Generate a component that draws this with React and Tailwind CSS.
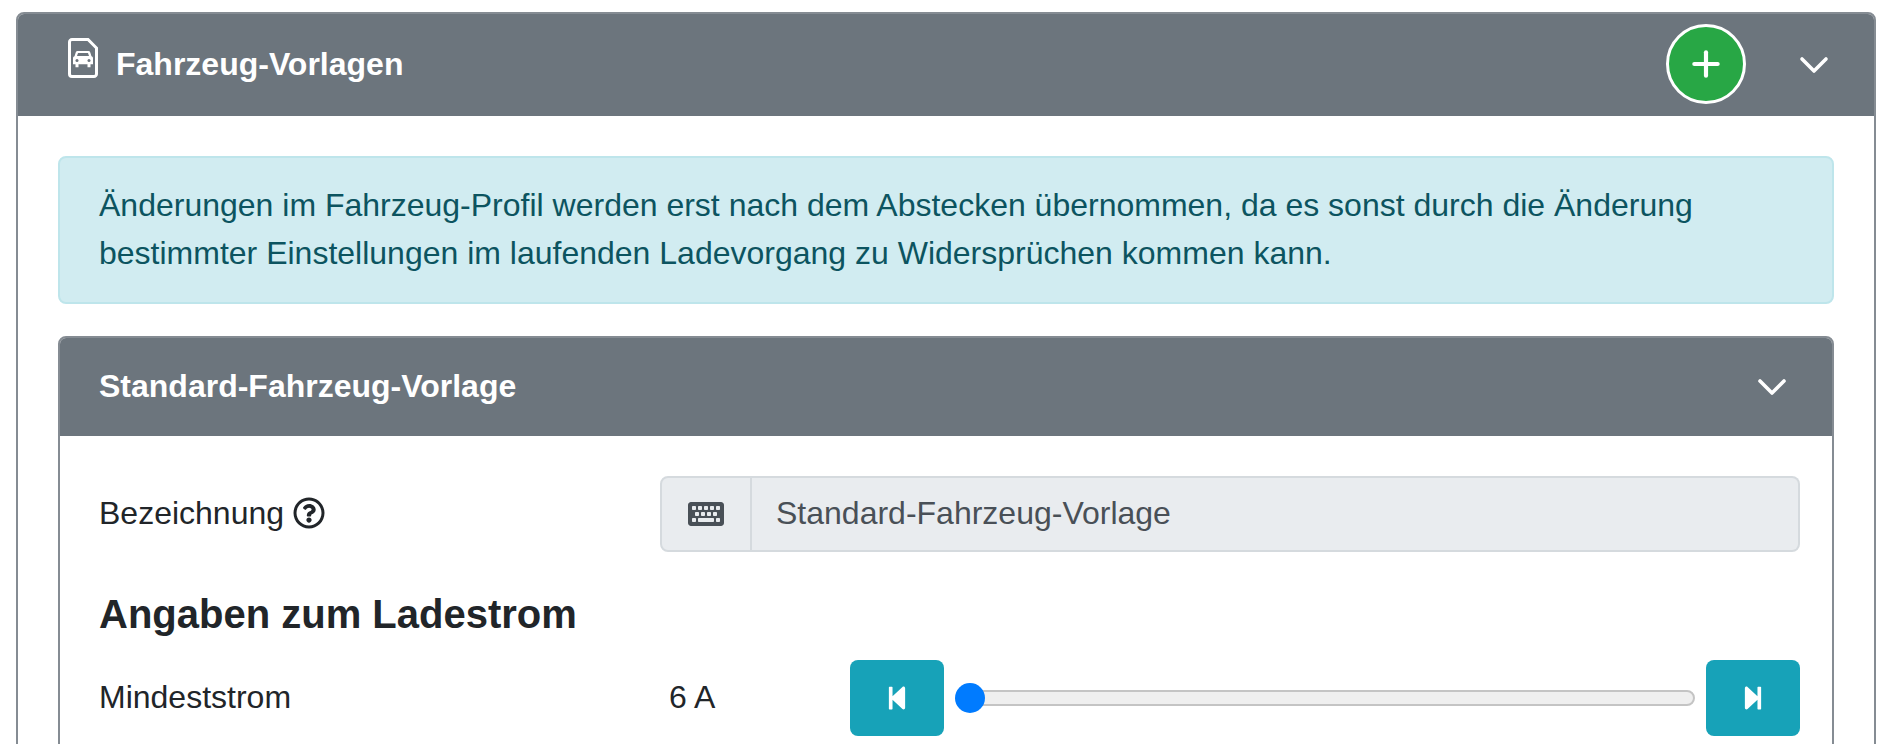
import React from "react";
import { ChevronDown, Plus } from "lucide-react";
import {
  FaKeyboard,
  FaRegQuestionCircle,
  FaStepBackward,
  FaStepForward,
} from "react-icons/fa";

function FileCarIcon() {
  return (
    <svg viewBox="0 0 30 40" className="w-[30px] h-[40px]" fill="none">
      <path
        d="M4 1.500h16L28.500 10v26a2.500 2.500 0 0 1-2.500 2.500H4A2.500 2.500 0 0 1 1.500 36V4A2.500 2.500 0 0 1 4 1.500z"
        stroke="white"
        strokeWidth="3"
      />
      <path
        d="M9.500 13h11c.8 0 1.400.4 1.700 1.200l1.300 4c.9.4 1.500 1.100 1.500 2v6h-2.500v3h-3v-3H10.500v3h-3v-3H5v-6c0-.9.6-1.600 1.500-2l1.300-4c.3-.8.9-1.200 1.700-1.200z"
        fill="white"
      />
      <path d="M10 15h10l1 3H9z" fill="#6c757d" />
      <circle cx="9" cy="22.500" r="1.500" fill="#6c757d" />
      <circle cx="21" cy="22.500" r="1.500" fill="#6c757d" />
    </svg>
  );
}

function StepButton({ children }) {
  return (
    <button className="flex items-center justify-center w-[94px] h-[76px] rounded-lg bg-[#17a2b8] text-white text-[26px] shrink-0">
      {children}
    </button>
  );
}

export default function App() {
  return (
    <div className="h-[744px] overflow-hidden bg-white pl-4 pr-5 pt-3 font-['Liberation_Sans',Arial,sans-serif] text-[32px] leading-[48px] text-[#212529]">
      <div className="border-2 border-[#858c93] rounded-lg">
        {/* Outer header */}
        <div className="flex items-center justify-between h-[102px] bg-[#6c757d] text-white font-bold rounded-t-[6px] pl-[50px] pr-9">
          <div className="flex items-center gap-[18px]">
            <div className="-translate-y-[7px]">
              <FileCarIcon />
            </div>
            <span className="-mt-[2px]">Fahrzeug-Vorlagen</span>
          </div>
          <div className="flex items-center gap-[44px]">
            <button className="flex items-center justify-center w-20 h-20 rounded-full bg-[#28a745] border-[3px] border-white text-white -mt-[2px]">
              <Plus size={40} strokeWidth={2.5} />
            </button>
            <ChevronDown size={48} strokeWidth={1.8} />
          </div>
        </div>

        <div className="px-10 pt-10">
          <div className="border-2 border-[#bee5eb] bg-[#d1ecf1] text-[#0c5460] rounded-lg px-[39px] pt-[23px] pb-[25px] mb-8">
            Änderungen im Fahrzeug-Profil werden erst nach dem Abstecken übernommen, da es sonst durch die Änderung
            <br />
            bestimmter Einstellungen im laufenden Ladevorgang zu Widersprüchen kommen kann.
          </div>

          <div className="border-2 border-[#858c93] rounded-lg">
            {/* Inner header */}
            <div className="flex items-center justify-between h-[98px] bg-[#6c757d] text-white font-bold rounded-t-[6px] pl-[39px] pr-9">
              <span className="-mt-[2px]">Standard-Fahrzeug-Vorlage</span>
              <ChevronDown size={48} strokeWidth={1.8} />
            </div>

            <div className="pl-[39px] pr-8 pt-10 pb-20">
              <div className="flex items-center">
                <div className="w-[561px] flex items-center gap-[9px] -mt-[2px]">
                  Bezeichnung
                  <FaRegQuestionCircle size={32} />
                </div>
                <div className="flex flex-1 h-[76px]">
                  <div className="flex items-center justify-center w-[92px] bg-[#e9ecef] border-2 border-[#d5dade] rounded-l-lg text-[#495057]">
                    <FaKeyboard size={36} />
                  </div>
                  <div className="flex flex-1 items-center bg-[#e9ecef] border-2 border-l-0 border-[#d5dade] rounded-r-lg px-6 pb-[2px] text-[#495057]">
                    Standard-Fahrzeug-Vorlage
                  </div>
                </div>
              </div>

              <h3 className="font-bold text-[40px] leading-[48px] mt-[38px] mb-[22px]">
                Angaben zum Ladestrom
              </h3>

              <div className="flex items-center">
                <div className="w-[570px] -mt-[2px]">Mindeststrom</div>
                <div className="w-[181px] -mt-[2px]">6 A</div>
                <div className="flex flex-1 items-center">
                  <StepButton>
                    <FaStepBackward />
                  </StepButton>
                  <div className="relative flex-1 h-4 ml-3 mr-[11px] rounded-full bg-[#efefef] border-2 border-[#c4c4c4]">
                    <div className="absolute -left-[3px] top-1/2 -translate-y-1/2 w-[30px] h-[30px] rounded-full bg-[#007bff]" />
                  </div>
                  <StepButton>
                    <FaStepForward />
                  </StepButton>
                </div>
              </div>
            </div>
          </div>
        </div>
      </div>
    </div>
  );
}
